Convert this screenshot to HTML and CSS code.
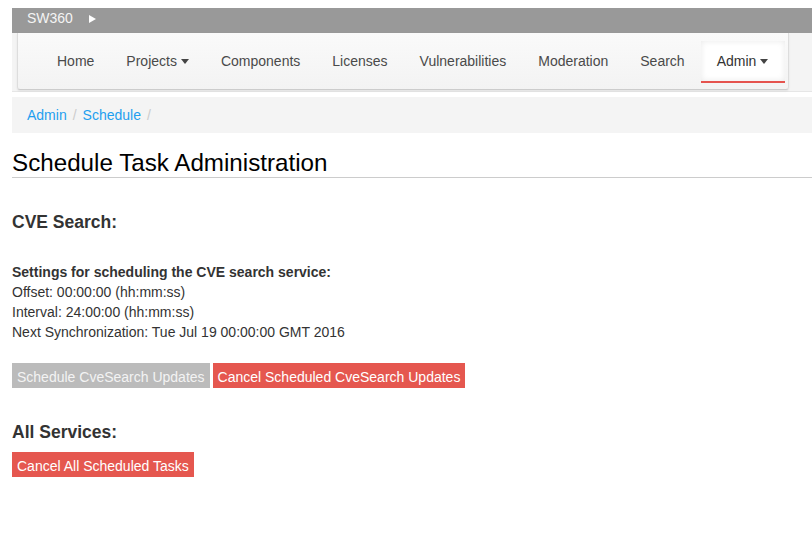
FILE: index.html
```html
<!DOCTYPE html>
<html>
<head>
<meta charset="utf-8">
<title>SW360 - Schedule</title>
<link rel="stylesheet" href="styles.css">
</head>
<body>
<div class="topbar">
  <span class="brand">SW360</span>
  <svg class="brand-arrow" width="7" height="8" viewBox="0 0 7 8"><polygon points="0,0 7,4 0,8" fill="#ffffff"/></svg>
</div>
<div class="nav-wrap">
  <nav class="navbar">
    <a class="nav-link" href="#">Home</a>
    <a class="nav-link" href="#">Projects<span class="caret"></span></a>
    <a class="nav-link" href="#">Components</a>
    <a class="nav-link" href="#">Licenses</a>
    <a class="nav-link" href="#">Vulnerabilities</a>
    <a class="nav-link" href="#">Moderation</a>
    <a class="nav-link" href="#">Search</a>
    <a class="nav-link active" href="#">Admin<span class="caret"></span></a>
  </nav>
</div>
<div class="breadcrumb">
  <a href="#">Admin</a><span class="sep">/</span><a href="#">Schedule</a><span class="sep">/</span>
</div>
<h1 class="page-title">Schedule Task Administration</h1>
<h3 class="section-title first">CVE Search:</h3>
<div class="settings">
  <b>Settings for scheduling the CVE search service:</b><br>
  Offset: 00:00:00 (hh:mm:ss)<br>
  Interval: 24:00:00 (hh:mm:ss)<br>
  Next Synchronization: Tue Jul 19 00:00:00 GMT 2016
</div>
<div class="btn-row">
  <button class="btn btn-disabled" type="button">Schedule CveSearch Updates</button>
  <button class="btn btn-danger" type="button">Cancel Scheduled CveSearch Updates</button>
</div>
<h3 class="section-title second">All Services:</h3>
<div class="btn-row tight">
  <button class="btn btn-danger" type="button">Cancel All Scheduled Tasks</button>
</div>
</body>
</html>
```
FILE: styles.css
```css
html, body {
  background: #ffffff;
}
body {
  margin: 8px 0 0 12px;
  font-family: "Liberation Sans", Arial, sans-serif;
  font-size: 14px;
  line-height: 20px;
  color: #333333;
}
.topbar {
  height: 25px;
  background: #999999;
  display: flex;
  align-items: center;
  padding-left: 15px;
}
.brand {
  color: #f4f4f4;
  font-size: 14px;
  line-height: 20px;
  margin-top: -5px;
}
.brand-arrow {
  margin-left: 16px;
  margin-top: -4px;
}
.nav-wrap {
  background: #f4f4f4;
  padding: 0 0 1px 5px;
  border-bottom: 1px solid #e6e6e6;
  margin-bottom: 5px;
}
.navbar {
  width: 747px;
  display: flex;
  align-items: flex-start;
  padding: 8px 0 6px 23px;
  background: linear-gradient(#fafafa, #f3f3f3);
  border: 1px solid #dddddd;
  border-top: none;
  border-bottom-color: #cccccc;
  border-radius: 0 0 3px 3px;
  box-shadow: 0 1px 2px rgba(0, 0, 0, 0.08);
}
.nav-link {
  display: flex;
  align-items: center;
  padding: 10px 16px;
  border-bottom: 2px solid transparent;
  color: #4a4a4a;
  text-decoration: none;
  line-height: 20px;
}
.nav-link.active {
  background: #ffffff;
  box-shadow: inset 0 0 6px rgba(0, 0, 0, 0.09);
  border-bottom-color: #e5534e;
  color: #333333;
  padding-right: 17px;
}
.caret {
  display: inline-block;
  width: 0;
  height: 0;
  margin-left: 4px;
  border-top: 5px solid #444444;
  border-left: 4px solid transparent;
  border-right: 4px solid transparent;
}
.breadcrumb {
  background: #f4f4f4;
  padding: 8px 15px;
  line-height: 20px;
}
.breadcrumb a {
  color: #1e9fef;
  text-decoration: none;
}
.breadcrumb .sep {
  color: #cccccc;
  padding: 0 6px;
}
.page-title {
  margin: 16px 0 0 0;
  font-size: 24.2px;
  line-height: 28px;
  font-weight: normal;
  color: #000000;
  border-bottom: 1px solid #cccccc;
}
.section-title {
  margin: 0;
  font-size: 17.5px;
  line-height: 20px;
  font-weight: bold;
  color: #333333;
}
.section-title.first {
  margin-top: 34px;
}
.section-title.second {
  margin-top: 34px;
}
.settings {
  margin-top: 30px;
  line-height: 20px;
}
.btn-row {
  display: flex;
  gap: 3px;
  margin-top: 21px;
}
.btn-row.tight {
  margin-top: 10px;
}
.btn {
  font-family: "Liberation Sans", Arial, sans-serif;
  font-size: 14px;
  line-height: 20px;
  padding: 4px 5px 1px 5px;
  border: none;
  border-radius: 0;
  cursor: pointer;
}
.btn-disabled {
  background: #bbbbbb;
  color: #f3f3f3;
}
.btn-danger {
  background: #e5574f;
  color: #ffffff;
}
```
